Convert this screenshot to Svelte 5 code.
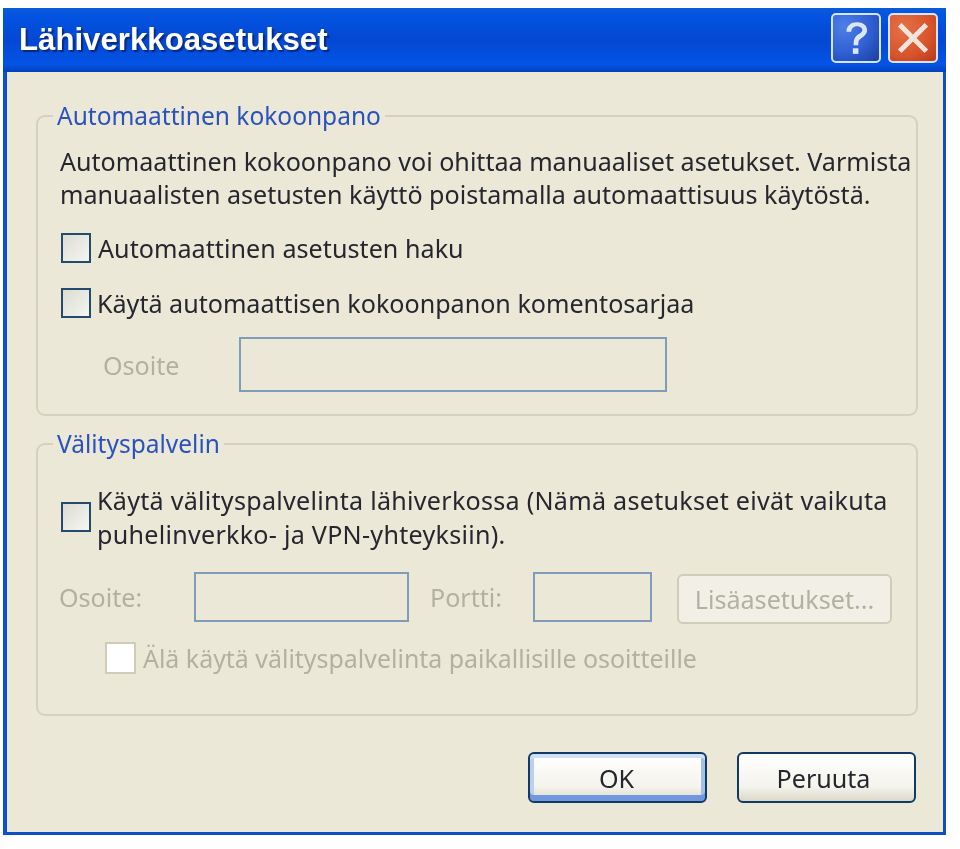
<script>
  // Local network settings dialog (XP look)
  const title = 'Lähiverkkoasetukset';
</script>

<div class="page">
  <div class="window">
    <header class="titlebar">
      <h1>{title}</h1>
      <div class="caption-buttons">
        <button class="cap help" aria-label="Ohje">
          <svg viewBox="0 0 48 48" width="38" height="38">
            <path d="M12 16 C12 8 18 4 25 4 C33 4 38 8 38 14 C38 19 34 22 30 25 C27 27 27 29 27 33 L21 33 C21 27 22 23 26 20 C29 18 32 17 32 14 C32 11 29 9 25 9 C21 9 18 12 18 16 Z" fill="#dbe6f8"/>
            <rect x="20" y="37" width="7" height="7" fill="#dbe6f8"/>
          </svg>
        </button>
        <button class="cap close" aria-label="Sulje">
          <svg viewBox="0 0 48 48" width="40" height="40">
            <path d="M8 8 L40 40 M40 8 L8 40" stroke="#f6e4da" stroke-width="6" fill="none"/>
          </svg>
        </button>
      </div>
    </header>

    <div class="body">
      <fieldset class="auto">
        <legend>Automaattinen kokoonpano</legend>
        <p class="intro">Automaattinen kokoonpano voi ohittaa manuaaliset asetukset. Varmista<br />manuaalisten asetusten käyttö poistamalla automaattisuus käytöstä.</p>
        <label class="row first"><span class="check"></span>Automaattinen asetusten haku</label>
        <label class="row second"><span class="check"></span>Käytä automaattisen kokoonpanon komentosarjaa</label>
        <div class="address">
          <span class="muted">Osoite</span>
          <span class="input wide"></span>
        </div>
      </fieldset>

      <fieldset class="proxy">
        <legend>Välityspalvelin</legend>
        <label class="row multi"><span class="check"></span><span>Käytä välityspalvelinta lähiverkossa (Nämä asetukset eivät vaikuta<br />puhelinverkko- ja VPN-yhteyksiin).</span></label>
        <div class="proxy-fields">
          <span class="muted label-host">Osoite:</span>
          <span class="input host"></span>
          <span class="muted port-label">Portti:</span>
          <span class="input port"></span>
          <span class="advanced">Lisäasetukset...</span>
        </div>
        <label class="row bypass muted"><span class="check off"></span>Älä käytä välityspalvelinta paikallisille osoitteille</label>
      </fieldset>

      <div class="actions">
        <button class="btn default">OK</button>
        <button class="btn cancel">Peruuta</button>
      </div>
    </div>
  </div>
</div>

<style>
  :global(body) {
    margin: 0;
    background: #fff;
  }
  .page {
    width: 960px;
    height: 849px;
    padding: 8px 0 0 3px;
    box-sizing: border-box;
    overflow: hidden;
    font-family: "Noto Sans", "Open Sans", sans-serif;
    font-size: 25.1px;
    color: #26262e;
  }
  .window {
    width: 943px;
    height: 827px;
    display: flex;
    flex-direction: column;
    box-sizing: border-box;
    filter: blur(0.6px);
  }
  .titlebar {
    height: 64px;
    flex: none;
    display: flex;
    align-items: center;
    justify-content: space-between;
    padding: 0 8px 0 16px;
    box-sizing: border-box;
    background: linear-gradient(180deg, #0a5bd8 0%, #0353e2 12%, #0348d2 50%, #0454e6 88%, #0340b8 100%);
  }
  h1 {
    margin: 0;
    font-family: "Liberation Sans", sans-serif;
    font-size: 31.2px;
    font-weight: 700;
    color: #fff;
    text-shadow: 2px 2px 1px #0a2a80;
  }
  .caption-buttons {
    display: flex;
    gap: 7px;
    margin-bottom: 4px;
  }
  .cap {
    width: 50px;
    height: 50px;
    padding: 0;
    border: 2px solid #d6e4f8;
    border-radius: 5px;
    display: flex;
    align-items: center;
    justify-content: center;
    box-sizing: border-box;
  }
  .help {
    background: radial-gradient(circle at 25% 25%, #4f7fe6 0%, #2f5fd2 55%, #1c3f9e 100%);
  }
  .close {
    background: radial-gradient(circle at 30% 30%, #e4714a 0%, #d8532a 60%, #b8381a 100%);
  }
  .body {
    flex: 1;
    min-height: 0;
    background: #ebe8d8;
    border-left: 4px solid #0c4fd0;
    border-right: 3px solid #0c4fc8;
    border-bottom: 3px solid #0c4fc8;
    padding: 29px 25px 0 29px;
    display: flex;
    flex-direction: column;
  }
  fieldset {
    margin: 0;
    padding: 0;
    min-width: 0;
    border: 2px solid #d4d1be;
    border-radius: 9px;
    box-sizing: border-box;
  }
  legend {
    color: #2a52bc;
    font-size: 24.5px;
    padding: 0 4px;
    margin-left: 15px;
    line-height: 30px;
  }
  .auto {
    height: 315px;
  }
  .proxy {
    height: 287px;
    margin-top: 13px;
  }
  .intro {
    margin: 14px 0 0 22px;
    line-height: 33px;
    white-space: nowrap;
  }
  .row {
    display: flex;
    align-items: center;
    white-space: nowrap;
  }
  .check {
    width: 30px;
    height: 30px;
    flex: none;
    border: 2px solid #244a6c;
    box-sizing: border-box;
    background: linear-gradient(135deg, #dcdcd4, #f6f6f2);
    margin-right: 7px;
  }
  .check.off {
    background: #fff;
    border-color: #cfccb8;
    width: 31px;
    height: 32px;
    margin-right: 7px;
  }
  .first {
    margin: 20px 0 0 23px;
    letter-spacing: 0.05px;
  }
  .second {
    margin: 21px 0 0 23px;
  }
  .second .check {
    margin-right: 6px;
  }
  .muted {
    color: #b2b0a0;
  }
  .address {
    display: flex;
    align-items: center;
    margin: 17px 0 0 65px;
  }
  .input {
    display: block;
    height: 55px;
    border: 2px solid #7f9db9;
    box-sizing: border-box;
  }
  .wide {
    width: 428px;
    margin-left: 59px;
  }
  .multi {
    margin: 24px 0 0 23px;
    line-height: 34px;
    letter-spacing: 0.27px;
  }
  .multi .check {
    margin-right: 6px;
  }
  .proxy-fields {
    display: flex;
    align-items: center;
    margin: 19px 0 0 21px;
  }
  .label-host {
    width: 135px;
    flex: none;
  }
  .host {
    width: 215px;
    height: 50px;
  }
  .port-label {
    width: 103px;
    flex: none;
    margin-left: 21px;
  }
  .port {
    width: 119px;
    height: 50px;
  }
  .advanced {
    margin: 4px 0 0 25px;
    width: 215px;
    height: 50px;
    border: 2px solid #cfccb8;
    border-radius: 6px;
    box-sizing: border-box;
    display: flex;
    align-items: center;
    justify-content: center;
    color: #b2b0a0;
    background: #f2f0e6;
  }
  .bypass {
    margin: 17px 0 0 67px;
    font-size: 24.95px;
  }
  .actions {
    display: flex;
    justify-content: flex-end;
    gap: 30px;
    margin-top: 36px;
    padding-right: 2px;
  }
  .btn {
    width: 179px;
    height: 51px;
    font: inherit;
    color: #26262e;
    border: 2px solid #0f3a63;
    border-radius: 6px;
    background: linear-gradient(180deg, #ffffff 0%, #f4f3ec 70%, #dcd8c8 100%);
    padding: 0;
  }
  .cancel {
    padding-right: 6px;
  }
  .default {
    padding-right: 2px;
    box-shadow: inset 0 4px 0 #cfe0f4, inset 0 -6px 0 #7198de, inset 4px 0 0 #bcd0ee, inset -4px 0 0 #a6bfe8;
  }
</style>
